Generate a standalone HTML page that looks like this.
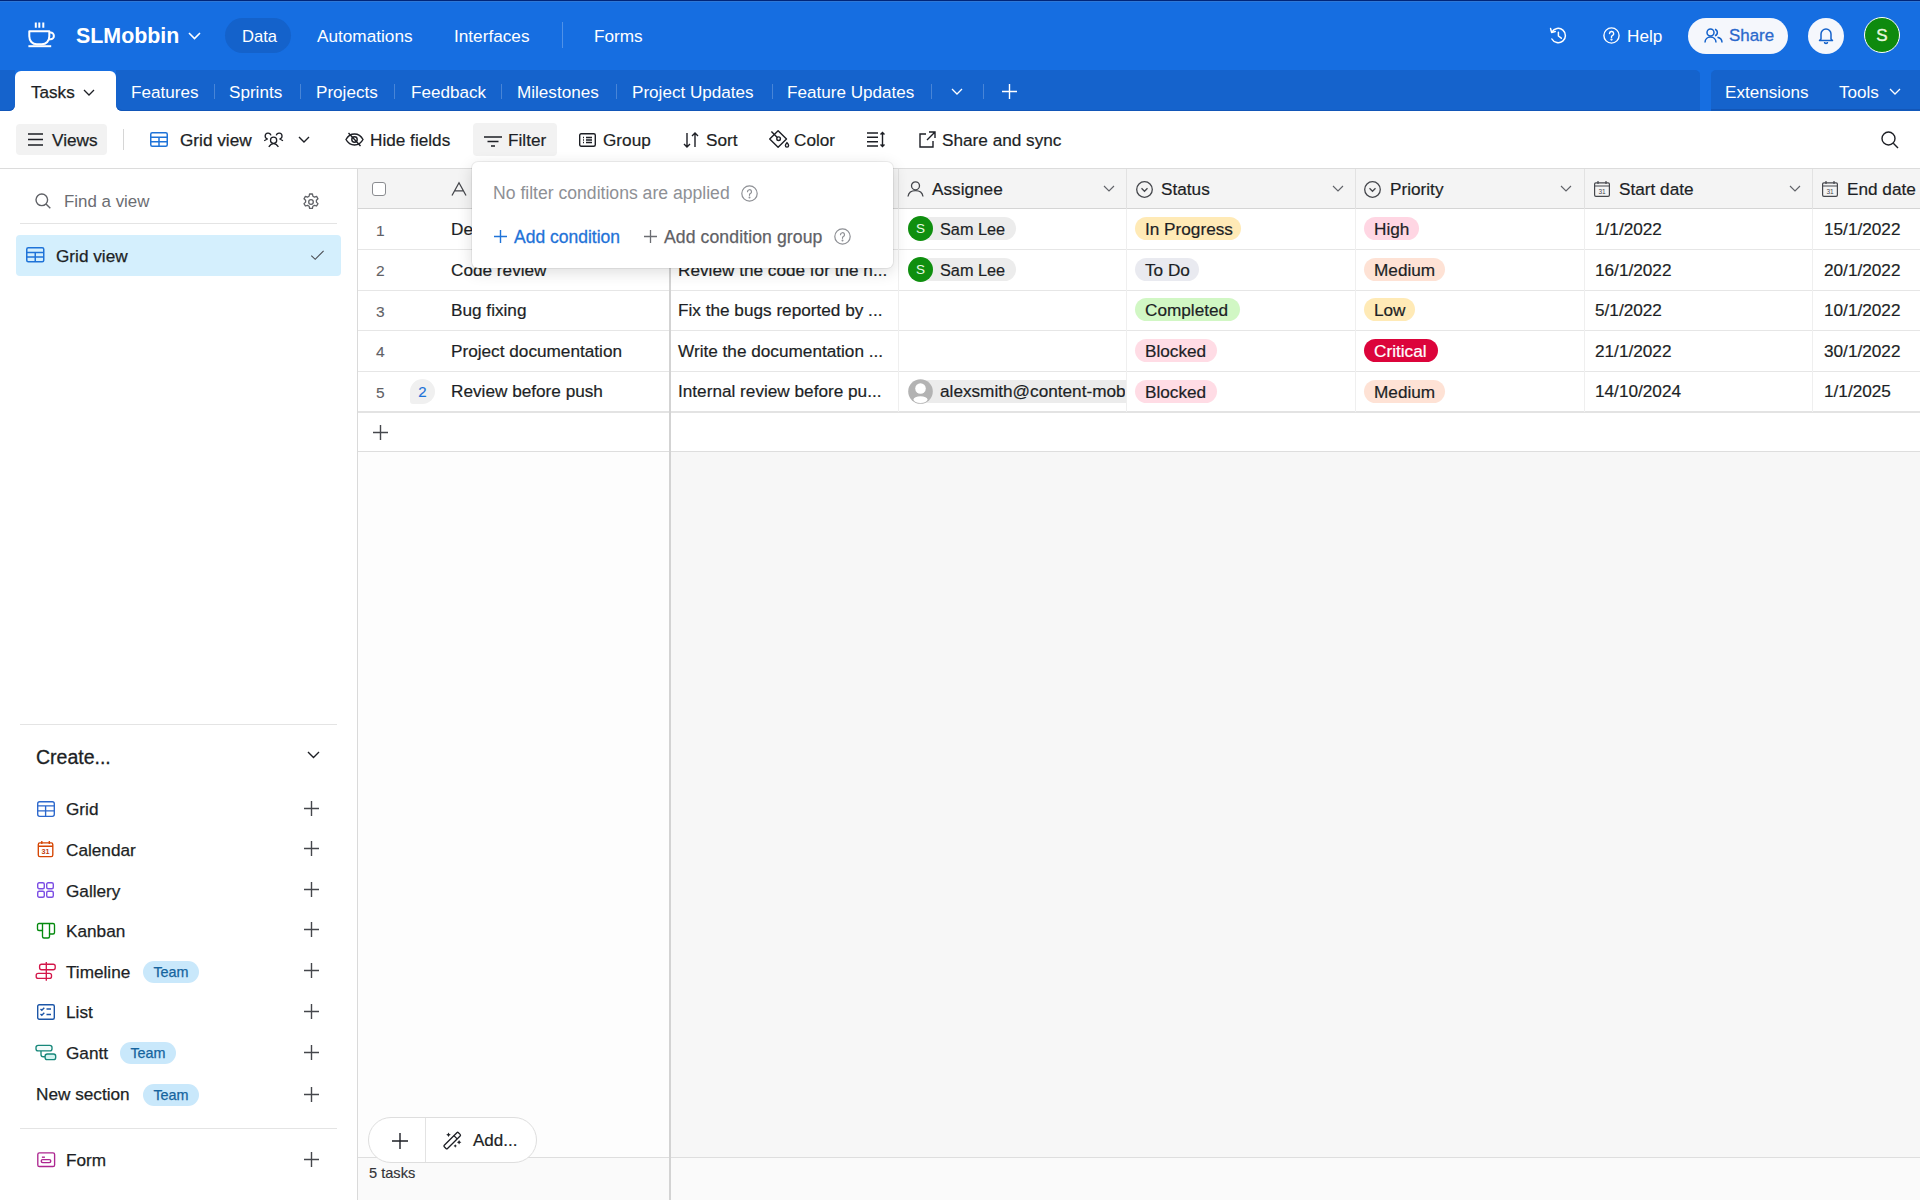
<!DOCTYPE html>
<html><head><meta charset="utf-8">
<style>
*{box-sizing:border-box;margin:0;padding:0}
html,body{width:1920px;height:1200px;overflow:hidden;background:#fff;font-family:"Liberation Sans",sans-serif;color:#1d1f25}
.a{position:absolute;white-space:nowrap}
svg{position:absolute;overflow:visible}
.topbar{position:absolute;left:0;top:0;width:1920px;height:78px;background:#166ee1}
.topline{position:absolute;left:0;top:0;width:1920px;height:1px;background:#00267a;box-shadow:0 1px 0 #2f78d6}
.wt{color:#fff;font-size:17.2px}
.tabbar{position:absolute;top:70px;height:41px;background:#1563cc;box-shadow:inset 0 -1px 0 #1256b8}
.tab{color:#fff;font-size:17.1px;top:83px}
.tsep{position:absolute;top:84px;width:1px;height:15px;background:rgba(255,255,255,.22)}
.tb{font-size:17.2px;color:#1d1f25;top:130px;-webkit-text-stroke:.2px #1d1f25}
.side{font-size:17.2px;color:#1d1f25;-webkit-text-stroke:.25px #1d1f25}
.badge{height:22px;border-radius:11px;background:#c9e8fb;color:#15649e;font-size:14.4px;text-align:center;line-height:23px;-webkit-text-stroke:.25px #15649e}
.hd{top:179px;font-size:17.2px;color:#1d1f25;-webkit-text-stroke:.2px #1d1f25}
.cell{font-size:17.2px;color:#1d1f25;-webkit-text-stroke:.2px #1d1f25}
.num{font-size:15.5px;color:#5f6166;-webkit-text-stroke:.1px #5f6166}
.pill{height:22.5px;border-radius:12px;font-size:17.2px;line-height:24px;padding-left:10px;color:#1d1f25;-webkit-text-stroke:.2px currentColor}
</style></head><body>

<!-- TOP BAR -->
<div class="topbar"></div>
<div class="topline"></div>
<!-- logo cup -->
<svg style="left:28px;top:22px" width="28" height="26" viewBox="0 0 28 26" fill="none" stroke="#fff" stroke-width="2"><path d="M7.8 .4v5.4M11.3 .4v5.4M15.3 .4v5.4"/><path d="M1.3 9.3h20v5c0 4.5-3 8-7.5 8h-5C4.3 22.3 1.3 18.8 1.3 14.3z" stroke-linejoin="round"/><path d="M21.3 10.5h1.2a3.4 3.4 0 0 1 0 6.8h-1.6"/><path d="M.4 24.2h22.8"/></svg>
<div class="a" style="left:76px;top:24px;font-size:21.4px;font-weight:bold;color:#fff">SLMobbin</div>
<svg style="left:188px;top:32px" width="13" height="8" viewBox="0 0 13 8" fill="none" stroke="#fff" stroke-width="1.6"><path d="M1 1l5.5 5.5L12 1"/></svg>
<div class="a" style="left:225px;top:18px;width:66px;height:35px;border-radius:18px;background:#1462cb"></div>
<div class="a wt" style="left:242px;top:26.5px;font-size:16.6px">Data</div>
<div class="a wt" style="left:317px;top:26px">Automations</div>
<div class="a wt" style="left:454px;top:26px">Interfaces</div>
<div class="a" style="left:562px;top:22px;width:1px;height:26px;background:rgba(255,255,255,.25)"></div>
<div class="a wt" style="left:594px;top:26px">Forms</div>

<!-- right side of top bar -->
<svg style="left:1548px;top:26px" width="20" height="20" viewBox="0 0 20 20" fill="none" stroke="#fff" stroke-width="1.5" stroke-linecap="round" stroke-linejoin="round"><path d="M4 5.9A7.2 7.2 0 1 1 3.9 13"/><path d="M2.6 2.6L3.6 6.4 7.3 5.5"/><path d="M10.4 6.2V10l2.9 2.2"/></svg>
<svg style="left:1603px;top:27px" width="18" height="18" viewBox="0 0 18 18" fill="none" stroke="#fff" stroke-width="1.4"><circle cx="8.5" cy="8.5" r="7.6"/><path d="M6.5 6.6a2.1 2.1 0 1 1 2.8 2c-.5.2-.8.6-.8 1.1v.7" stroke-linecap="round"/><circle cx="8.5" cy="12.6" r=".45" fill="#fff"/></svg>
<div class="a wt" style="left:1627px;top:26px">Help</div>
<div class="a" style="left:1688px;top:17.5px;width:100px;height:36px;border-radius:18px;background:#f5f7fc"></div>
<svg style="left:1704px;top:28px" width="19" height="15" viewBox="0 0 19 15" fill="none" stroke="#1462cb" stroke-width="1.5">
  <circle cx="6.5" cy="4.5" r="3.5"/><path d="M1 14.5c0-3.3 2.5-5.5 5.5-5.5s5.5 2.2 5.5 5.5"/><path d="M11 1.2a3.5 3.5 0 0 1 0 6.6"/><path d="M13.5 9.3c2.4.6 4.5 2.5 4.5 5.2"/>
</svg>
<div class="a" style="left:1729px;top:26px;font-size:16.9px;color:#2a68cc;-webkit-text-stroke:.3px #2a68cc">Share</div>
<div class="a" style="left:1808px;top:17.5px;width:36px;height:36px;border-radius:50%;background:#f5f7fc"></div>
<svg style="left:1818px;top:27px" width="16" height="17" viewBox="0 0 16 17" fill="none" stroke="#1462cb" stroke-width="1.5">
  <path d="M3 12V7a5 5 0 0 1 10 0v5l1.5 1.5h-13z" stroke-linejoin="round"/><path d="M6.5 15a1.5 1.5 0 0 0 3 0"/>
</svg>
<div class="a" style="left:1864px;top:17px;width:36px;height:36px;border-radius:50%;background:#0e8a0e;border:1.5px solid #fff"></div>
<div class="a" style="left:1864px;top:26px;width:36px;text-align:center;color:#e6f7df;font-size:17px;-webkit-text-stroke:.4px #e6f7df">S</div>

<!-- TAB BAR -->
<div class="tabbar" style="left:0;width:15px;border-bottom-right-radius:6px"></div>
<div class="tabbar" style="left:116px;width:1584px;border-bottom-left-radius:6px;border-top-right-radius:5px"></div>
<div class="a" style="left:1700px;top:70px;width:11px;height:41px;background:#166ee1"></div>
<div class="tabbar" style="left:1711px;width:209px;border-top-left-radius:5px;border-bottom:1px solid #1259bb"></div>
<div class="a" style="left:15px;top:71px;width:101px;height:41px;background:#fff;border-radius:6px 6px 0 0"></div>
<div class="a tab" style="left:31px;color:#1d1f25;-webkit-text-stroke:.25px #1d1f25">Tasks</div>
<svg style="left:83px;top:89px" width="12" height="7" viewBox="0 0 12 7" fill="none" stroke="#1d1f25" stroke-width="1.3"><path d="M1 1l5 5 5-5"/></svg>
<div class="a tab" style="left:131px">Features</div>
<div class="tsep" style="left:214px"></div>
<div class="a tab" style="left:229px">Sprints</div>
<div class="tsep" style="left:300px"></div>
<div class="a tab" style="left:316px">Projects</div>
<div class="tsep" style="left:394px"></div>
<div class="a tab" style="left:411px">Feedback</div>
<div class="tsep" style="left:501px"></div>
<div class="a tab" style="left:517px">Milestones</div>
<div class="tsep" style="left:616px"></div>
<div class="a tab" style="left:632px">Project Updates</div>
<div class="tsep" style="left:772px"></div>
<div class="a tab" style="left:787px">Feature Updates</div>
<div class="tsep" style="left:931px"></div>
<svg style="left:951px;top:88px" width="12" height="7" viewBox="0 0 12 7" fill="none" stroke="#fff" stroke-width="1.3"><path d="M1 1l5 5 5-5"/></svg>
<div class="tsep" style="left:983px"></div>
<svg style="left:1002px;top:84px" width="15" height="15" viewBox="0 0 15 15" fill="none" stroke="#fff" stroke-width="1.4"><path d="M7.5 0v15M0 7.5h15"/></svg>
<div class="a tab" style="left:1725px">Extensions</div>
<div class="a tab" style="left:1839px">Tools</div>
<svg style="left:1889px;top:88px" width="12" height="7" viewBox="0 0 12 7" fill="none" stroke="#fff" stroke-width="1.3"><path d="M1 1l5 5 5-5"/></svg>

<!-- TOOLBAR -->
<div class="a" style="left:0;top:168px;width:1920px;height:1px;background:#dcdcdc"></div>
<div class="a" style="left:16px;top:124px;width:91px;height:31px;border-radius:4px;background:#f2f2f2"></div>
<svg style="left:28px;top:133px" width="15" height="13" viewBox="0 0 15 13" fill="none" stroke="#1d1f25" stroke-width="1.5"><path d="M0 1h15M0 6.5h15M0 12h15"/></svg>
<div class="a tb" style="left:52px;-webkit-text-stroke:.25px #1d1f25">Views</div>
<div class="a" style="left:123px;top:129px;width:1px;height:21px;background:#d6d6d6"></div>
<svg style="left:150px;top:132px" width="18" height="15" viewBox="0 0 18 15" fill="none" stroke="#1f73d8" stroke-width="1.5"><rect x=".75" y=".75" width="16.5" height="13.5" rx="1.5"/><path d="M.75 5.2h16.5M.75 9.7h16.5M9 5.2v9"/></svg>
<div class="a tb" style="left:180px;-webkit-text-stroke:.25px #1d1f25">Grid view</div>
<svg style="left:258px;top:125px" width="30" height="25" viewBox="0 0 30 25" fill="none" stroke="#1d1f25" stroke-width="1.3"><path d="M12.9 10.4A2.9 2.9 0 1 0 9.5 13.9M6.2 15.7L9.8 13.7M18.3 10.4A2.9 2.9 0 1 1 21.7 13.9M25 15.7L21.4 13.7"/><circle cx="15.6" cy="15.3" r="3.1"/><path d="M10.8 21.8C12.5 19.3 14 18.6 15.6 18.6S18.7 19.3 20.4 21.8"/></svg>
<svg style="left:298px;top:136px" width="12" height="7" viewBox="0 0 12 7" fill="none" stroke="#1d1f25" stroke-width="1.4"><path d="M1 1l5 5 5-5"/></svg>
<svg style="left:345px;top:132px" width="19" height="15" viewBox="0 0 19 15" fill="none" stroke="#1d1f25" stroke-width="1.4"><path d="M1 7.5C3 3.8 6 2 9.5 2s6.5 1.8 8.5 5.5c-2 3.7-5 5.5-8.5 5.5S3 11.2 1 7.5z"/><circle cx="9.5" cy="7.5" r="2.7"/><path d="M3.5 1l12 13"/></svg>
<div class="a tb" style="left:370px">Hide fields</div>
<div class="a" style="left:473px;top:123px;width:84px;height:33px;border-radius:4px;background:#f2f2f2"></div>
<svg style="left:484px;top:136px" width="18" height="11" viewBox="0 0 18 11" fill="none" stroke="#1d1f25" stroke-width="1.4"><path d="M0 1h18M3.5 5.5h11M7 10h4"/></svg>
<div class="a tb" style="left:508px">Filter</div>
<svg style="left:579px;top:133px" width="17" height="14" viewBox="0 0 17 14" fill="none" stroke="#1d1f25" stroke-width="1.4"><rect x=".7" y=".7" width="15.6" height="12.6" rx="1.5"/><path d="M4 4.5h1M7 4.5h6M4 7h1M7 7h6M4 9.5h1M7 9.5h6"/></svg>
<div class="a tb" style="left:603px">Group</div>
<svg style="left:683px;top:132px" width="16" height="16" viewBox="0 0 16 16" fill="none" stroke="#1d1f25" stroke-width="1.4"><path d="M4 1v14M1 12l3 3 3-3M12 15V1M9 4l3-3 3 3"/></svg>
<div class="a tb" style="left:706px">Sort</div>
<svg style="left:764px;top:126px" width="30" height="26" viewBox="0 0 30 26" fill="none" stroke="#1d1f25" stroke-width="1.4" stroke-linejoin="round"><path d="M14.1 4.8L22.5 13.1 14.1 21.2 5.7 13.1z"/><path d="M7.4 5.4L13.3 11.4"/><circle cx="14.6" cy="12.7" r="1.8"/><path d="M23 16.6c-.9 1-1.6 2-1.6 2.9a1.6 1.6 0 0 0 3.2 0c0-.9-.7-1.9-1.6-2.9z"/></svg>
<div class="a tb" style="left:794px">Color</div>
<svg style="left:867px;top:132px" width="19" height="15" viewBox="0 0 19 15" fill="none" stroke="#1d1f25" stroke-width="1.4"><path d="M0 1h11M0 5.3h11M0 9.7h11M0 14h11M15.5 1v13M13.5 2.5l2-2 2 2M13.5 12.5l2 2 2-2"/></svg>
<svg style="left:919px;top:131px" width="17" height="17" viewBox="0 0 17 17" fill="none" stroke="#1d1f25" stroke-width="1.4"><path d="M7 3H1v13h13v-6"/><path d="M10 1h6v6M16 1L8 9"/></svg>
<div class="a tb" style="left:942px">Share and sync</div>
<svg style="left:1881px;top:131px" width="18" height="18" viewBox="0 0 18 18" fill="none" stroke="#1d1f25" stroke-width="1.4"><circle cx="7.5" cy="7.5" r="6.5"/><path d="M12.3 12.3L17 17"/></svg>


<!-- SIDEBAR -->
<div class="a" style="left:357px;top:169px;width:1px;height:1031px;background:#dadada"></div>
<svg style="left:35px;top:193px" width="16" height="16" viewBox="0 0 16 16" fill="none" stroke="#5f6166" stroke-width="1.4"><circle cx="6.8" cy="6.8" r="5.8"/><path d="M11 11l4.3 4.3"/></svg>
<div class="a" style="left:64px;top:191.5px;font-size:16.9px;color:#6b6d72">Find a view</div>
<svg style="left:302px;top:193px" width="18" height="18" viewBox="0 0 18 18" fill="none" stroke="#5f6166" stroke-width="1.3"><path d="M7.6 1h2.8l.5 2.2 1.6.9 2.1-.7 1.4 2.4-1.6 1.5v1.8l1.6 1.5-1.4 2.4-2.1-.7-1.6.9-.5 2.2H7.6l-.5-2.2-1.6-.9-2.1.7-1.4-2.4 1.6-1.5V7.3L2 5.8l1.4-2.4 2.1.7 1.6-.9z" stroke-linejoin="round"/><circle cx="9" cy="9" r="2.3"/></svg>
<div class="a" style="left:20px;top:223px;width:317px;height:1px;background:#e4e4e4"></div>
<div class="a" style="left:16px;top:235px;width:325px;height:41px;border-radius:4px;background:#d4effd"></div>
<svg style="left:26px;top:247px" width="19" height="16" viewBox="0 0 19 16" fill="none" stroke="#1f73d8" stroke-width="1.5"><rect x=".75" y=".75" width="17" height="14" rx="1.5"/><path d="M.75 5.4h17M.75 10.1h17M9.25 5.4v9.6"/></svg>
<div class="a" style="left:56px;top:246px;font-size:17.2px;color:#1d1f25;-webkit-text-stroke:.25px #1d1f25">Grid view</div>
<svg style="left:310px;top:250px" width="15" height="12" viewBox="0 0 15 12" fill="none" stroke="#4a4c51" stroke-width="1.1"><path d="M1.3 5.6l3.9 3.7L13.6 .8"/></svg>

<div class="a" style="left:20px;top:724px;width:317px;height:1px;background:#e4e4e4"></div>
<div class="a" style="left:36px;top:746px;font-size:19.5px;color:#1d1f25;-webkit-text-stroke:.3px #1d1f25">Create...</div>
<svg style="left:307px;top:751px" width="13" height="8" viewBox="0 0 13 8" fill="none" stroke="#1d1f25" stroke-width="1.4"><path d="M1 1l5.5 5.5L12 1"/></svg>

<svg style="left:37px;top:801px" width="18" height="16" viewBox="0 0 18 16" fill="none" stroke="#2b67cc" stroke-width="1.35"><rect x=".7" y=".7" width="16.6" height="14.6" rx="2"/><path d="M.7 4.8h16.6M.7 9.8h16.6M8.6 4.8v10.5"/></svg>
<div class="a side" style="left:66px;top:799px">Grid</div>
<svg style="left:36px;top:840px" width="20" height="19" viewBox="0 0 20 19" fill="none" stroke="#d54401" stroke-width="1.35"><rect x="2.3" y="2.8" width="14.5" height="13.8" rx="1.6"/><path d="M2.3 6.2h14.5M5.8 1v3M13.3 1v3"/><text x="9.6" y="14.4" font-size="7.2" font-family="Liberation Sans" font-weight="bold" text-anchor="middle" fill="#c2410c" stroke="none">31</text></svg>
<div class="a side" style="left:66px;top:840px">Calendar</div>
<svg style="left:37px;top:882px" width="17" height="16" viewBox="0 0 17 16" fill="none" stroke="#7c4ee4" stroke-width="1.4"><rect x=".7" y=".7" width="6.6" height="6" rx="1.5"/><rect x="9.7" y=".7" width="6.6" height="6" rx="1.5"/><rect x=".7" y="9.3" width="6.6" height="6" rx="1.5"/><rect x="9.7" y="9.3" width="6.6" height="6" rx="1.5"/></svg>
<div class="a side" style="left:66px;top:881px">Gallery</div>
<svg style="left:36px;top:922px" width="20" height="18" viewBox="0 0 20 18" fill="none" stroke="#048a0e" stroke-width="1.35" stroke-linejoin="round"><path d="M3 1.5H17a1.5 1.5 0 0 1 1.5 1.5V10.5a1.5 1.5 0 0 1-1.5 1.5H13.5V14.5a1.5 1.5 0 0 1-1.5 1.5H8a1.5 1.5 0 0 1-1.5-1.5V8.5H3a1.5 1.5 0 0 1-1.5-1.5V3A1.5 1.5 0 0 1 3 1.5z"/><path d="M6.5 1.5V8.5M13.5 1.5V12"/></svg>
<div class="a side" style="left:66px;top:921px">Kanban</div>
<svg style="left:34px;top:960px" width="24" height="22" viewBox="0 0 24 22" fill="none" stroke="#d3174a" stroke-width="1.35"><path d="M12.3 1.9V20.7"/><rect x="5.6" y="4.2" width="15.6" height="5.5" rx="2"/><rect x="2.2" y="13.3" width="15.3" height="5.1" rx="2"/></svg>
<div class="a side" style="left:66px;top:962px">Timeline</div>
<div class="a badge" style="left:143px;top:961px;width:56px">Team</div>
<svg style="left:37px;top:1004px" width="18" height="16" viewBox="0 0 18 16" fill="none" stroke="#1c56a8" stroke-width="1.4"><rect x=".7" y=".7" width="16.6" height="14.6" rx="1.5"/><path d="M3.5 5l1.3 1.3L7.3 3.8M3.5 10l1.3 1.3 2.5-2.5M9.5 5h4.5M9.5 10.5h4.5"/></svg>
<div class="a side" style="left:66px;top:1002px">List</div>
<svg style="left:34px;top:1043px" width="24" height="19" viewBox="0 0 24 19" fill="none" stroke="#17877a" stroke-width="1.35"><rect x="2" y="2.4" width="16" height="5.5" rx="2.2" fill="#f2fbfa"/><rect x="11.1" y="11" width="10.6" height="5.6" rx="2.2" fill="#d3f3f0"/><path d="M7 7.9v3.6a2.2 2.2 0 0 0 2.2 2.2h1.9"/></svg>
<div class="a side" style="left:66px;top:1043px">Gantt</div>
<div class="a badge" style="left:120px;top:1042px;width:56px">Team</div>
<div class="a side" style="left:36px;top:1084px">New section</div>
<div class="a badge" style="left:143px;top:1084px;width:56px">Team</div>
<div class="a" style="left:20px;top:1128px;width:317px;height:1px;background:#e4e4e4"></div>
<svg style="left:36px;top:1150px" width="20" height="18" viewBox="0 0 20 18" fill="none" stroke="#ad2690" stroke-width="1.35"><rect x="1.8" y="2.8" width="16.8" height="13.7" rx="1.6"/><path d="M5.9 7.2h3"/><rect x="5.2" y="9.6" width="9.6" height="3" rx="1.5"/></svg>
<div class="a side" style="left:66px;top:1150px">Form</div>
<svg style="left:304px;top:801px" width="15" height="15" viewBox="0 0 15 15" fill="none" stroke="#45474c" stroke-width="1.4"><path d="M7.5 0v15M0 7.5h15"/></svg>
<svg style="left:304px;top:841px" width="15" height="15" viewBox="0 0 15 15" fill="none" stroke="#45474c" stroke-width="1.4"><path d="M7.5 0v15M0 7.5h15"/></svg>
<svg style="left:304px;top:882px" width="15" height="15" viewBox="0 0 15 15" fill="none" stroke="#45474c" stroke-width="1.4"><path d="M7.5 0v15M0 7.5h15"/></svg>
<svg style="left:304px;top:922px" width="15" height="15" viewBox="0 0 15 15" fill="none" stroke="#45474c" stroke-width="1.4"><path d="M7.5 0v15M0 7.5h15"/></svg>
<svg style="left:304px;top:963px" width="15" height="15" viewBox="0 0 15 15" fill="none" stroke="#45474c" stroke-width="1.4"><path d="M7.5 0v15M0 7.5h15"/></svg>
<svg style="left:304px;top:1004px" width="15" height="15" viewBox="0 0 15 15" fill="none" stroke="#45474c" stroke-width="1.4"><path d="M7.5 0v15M0 7.5h15"/></svg>
<svg style="left:304px;top:1045px" width="15" height="15" viewBox="0 0 15 15" fill="none" stroke="#45474c" stroke-width="1.4"><path d="M7.5 0v15M0 7.5h15"/></svg>
<svg style="left:304px;top:1087px" width="15" height="15" viewBox="0 0 15 15" fill="none" stroke="#45474c" stroke-width="1.4"><path d="M7.5 0v15M0 7.5h15"/></svg>
<svg style="left:304px;top:1152px" width="15" height="15" viewBox="0 0 15 15" fill="none" stroke="#45474c" stroke-width="1.4"><path d="M7.5 0v15M0 7.5h15"/></svg>


<!-- GRID -->
<!--GRID_START-->
<div class="a" style="left:358px;top:452px;width:312px;height:748px;background:#fdfdfd"></div>
<div class="a" style="left:670px;top:452px;width:1250px;height:748px;background:#f7f7f7"></div>
<div class="a" style="left:358px;top:1158px;width:1562px;height:42px;background:#fafafa"></div>
<div class="a" style="left:358px;top:169px;width:1562px;height:40px;background:#f4f4f4"></div>
<div class="a" style="left:358px;top:208px;width:1562px;height:1px;background:#d5d5d5"></div>
<div class="a" style="left:358px;top:249px;width:1562px;height:1px;background:#e6e6e6"></div>
<div class="a" style="left:358px;top:290px;width:1562px;height:1px;background:#e6e6e6"></div>
<div class="a" style="left:358px;top:330px;width:1562px;height:1px;background:#e6e6e6"></div>
<div class="a" style="left:358px;top:371px;width:1562px;height:1px;background:#e6e6e6"></div>
<div class="a" style="left:358px;top:411px;width:1562px;height:2px;background:#e3e3e3"></div>
<div class="a" style="left:358px;top:451px;width:1562px;height:1px;background:#dedede"></div>
<div class="a" style="left:358px;top:1157px;width:1562px;height:1px;background:#dedede"></div>
<div class="a" style="left:898px;top:169px;width:1px;height:40px;background:#e2e2e2"></div>
<div class="a" style="left:898px;top:209px;width:1px;height:203px;background:#efefef"></div>
<div class="a" style="left:1126px;top:169px;width:1px;height:40px;background:#e2e2e2"></div>
<div class="a" style="left:1126px;top:209px;width:1px;height:203px;background:#efefef"></div>
<div class="a" style="left:1355px;top:169px;width:1px;height:40px;background:#e2e2e2"></div>
<div class="a" style="left:1355px;top:209px;width:1px;height:203px;background:#efefef"></div>
<div class="a" style="left:1584px;top:169px;width:1px;height:40px;background:#e2e2e2"></div>
<div class="a" style="left:1584px;top:209px;width:1px;height:203px;background:#efefef"></div>
<div class="a" style="left:1812px;top:169px;width:1px;height:40px;background:#e2e2e2"></div>
<div class="a" style="left:1812px;top:209px;width:1px;height:203px;background:#efefef"></div>
<div class="a" style="left:669px;top:169px;width:2px;height:1031px;background:#d3d3d3"></div>
<div class="a" style="left:372px;top:182px;width:14px;height:14px;border:1.3px solid #8a8c90;border-radius:3px;background:#fff"></div>
<svg style="left:451px;top:182px" width="16" height="14" viewBox="0 0 16 14" fill="none" stroke="#45474c" stroke-width="1.3"><path d="M1 13.5L8 .8l7 12.7M3.8 8.8h8.4"/></svg>
<svg style="left:907px;top:181px" width="17" height="16" viewBox="0 0 17 16" fill="none" stroke="#45474c" stroke-width="1.3"><circle cx="8.5" cy="4.8" r="4"/><path d="M1 15.5c.6-3.6 3.6-5.8 7.5-5.8s6.9 2.2 7.5 5.8"/></svg><div class="a hd" style="left:932px">Assignee</div><svg style="left:1103px;top:185px" width="12" height="7" viewBox="0 0 12 7" fill="none" stroke="#616369" stroke-width="1.15"><path d="M1 1l5 5 5-5"/></svg>
<svg style="left:1136px;top:181px" width="17" height="17" viewBox="0 0 17 17" fill="none" stroke="#45474c" stroke-width="1.3"><circle cx="8.5" cy="8.5" r="7.8"/><path d="M5.5 7.3l3 3 3-3"/></svg><div class="a hd" style="left:1161px">Status</div><svg style="left:1332px;top:185px" width="12" height="7" viewBox="0 0 12 7" fill="none" stroke="#616369" stroke-width="1.15"><path d="M1 1l5 5 5-5"/></svg>
<svg style="left:1364px;top:181px" width="17" height="17" viewBox="0 0 17 17" fill="none" stroke="#45474c" stroke-width="1.3"><circle cx="8.5" cy="8.5" r="7.8"/><path d="M5.5 7.3l3 3 3-3"/></svg><div class="a hd" style="left:1390px">Priority</div><svg style="left:1560px;top:185px" width="12" height="7" viewBox="0 0 12 7" fill="none" stroke="#616369" stroke-width="1.15"><path d="M1 1l5 5 5-5"/></svg>
<svg style="left:1594px;top:181px" width="16" height="16" viewBox="0 0 16 16" fill="none" stroke="#45474c" stroke-width="1.2"><rect x=".6" y="1.8" width="14.8" height="13.6" rx="1.3"/><path d="M.6 5h14.8M4 0v3M12 0v3"/><text x="8" y="12.8" font-size="6.5" font-family="Liberation Sans" text-anchor="middle" fill="#45474c" stroke="none">31</text></svg><div class="a hd" style="left:1619px">Start date</div><svg style="left:1789px;top:185px" width="12" height="7" viewBox="0 0 12 7" fill="none" stroke="#616369" stroke-width="1.15"><path d="M1 1l5 5 5-5"/></svg>
<svg style="left:1822px;top:181px" width="16" height="16" viewBox="0 0 16 16" fill="none" stroke="#45474c" stroke-width="1.2"><rect x=".6" y="1.8" width="14.8" height="13.6" rx="1.3"/><path d="M.6 5h14.8M4 0v3M12 0v3"/><text x="8" y="12.8" font-size="6.5" font-family="Liberation Sans" text-anchor="middle" fill="#45474c" stroke="none">31</text></svg><div class="a hd" style="left:1847px">End date</div>
<div class="a num" style="left:376px;top:221.5px">1</div>
<div class="a cell" style="left:451px;top:219px">Design</div>
<div class="a pill" style="left:1135px;top:217px;width:106px;background:#ffeab6">In Progress</div>
<div class="a pill" style="left:1364px;top:217px;width:55px;background:#ffd6e3;color:#1d1f25">High</div>
<div class="a cell" style="left:1595px;top:219px">1/1/2022</div>
<div class="a cell" style="left:1824px;top:219px">15/1/2022</div>
<div class="a num" style="left:376px;top:261.5px">2</div>
<div class="a cell" style="left:451px;top:260px">Code review</div>
<div class="a cell" style="left:678px;top:260px">Review the code for the n...</div>
<div class="a pill" style="left:1135px;top:258px;width:64px;background:#e9eaf0">To Do</div>
<div class="a pill" style="left:1364px;top:258px;width:81px;background:#fee2d5;color:#1d1f25">Medium</div>
<div class="a cell" style="left:1595px;top:260px">16/1/2022</div>
<div class="a cell" style="left:1824px;top:260px">20/1/2022</div>
<div class="a num" style="left:376px;top:302.5px">3</div>
<div class="a cell" style="left:451px;top:300px">Bug fixing</div>
<div class="a cell" style="left:678px;top:300px">Fix the bugs reported by ...</div>
<div class="a pill" style="left:1135px;top:298px;width:105px;background:#d1f7c4">Completed</div>
<div class="a pill" style="left:1364px;top:298px;width:51px;background:#ffeab6;color:#1d1f25">Low</div>
<div class="a cell" style="left:1595px;top:300px">5/1/2022</div>
<div class="a cell" style="left:1824px;top:300px">10/1/2022</div>
<div class="a num" style="left:376px;top:342.5px">4</div>
<div class="a cell" style="left:451px;top:341px">Project documentation</div>
<div class="a cell" style="left:678px;top:341px">Write the documentation ...</div>
<div class="a pill" style="left:1135px;top:339px;width:82px;background:#ffdce5">Blocked</div>
<div class="a pill" style="left:1364px;top:339px;width:74px;background:#dc043b;color:#fff">Critical</div>
<div class="a cell" style="left:1595px;top:341px">21/1/2022</div>
<div class="a cell" style="left:1824px;top:341px">30/1/2022</div>
<div class="a num" style="left:376px;top:383.5px">5</div>
<div class="a cell" style="left:451px;top:381px">Review before push</div>
<div class="a cell" style="left:678px;top:381px">Internal review before pu...</div>
<div class="a pill" style="left:1135px;top:380px;width:82px;background:#ffdce5">Blocked</div>
<div class="a pill" style="left:1364px;top:380px;width:81px;background:#fee2d5;color:#1d1f25">Medium</div>
<div class="a cell" style="left:1595px;top:381px">14/10/2024</div>
<div class="a cell" style="left:1824px;top:381px">1/1/2025</div>
<div class="a" style="left:912px;top:217px;width:104px;height:22.5px;border-radius:12px;background:#ececec"></div>
<div class="a" style="left:908px;top:216px;width:25px;height:25px;border-radius:50%;background:#0f8f0f;color:#e8fbe4;font-size:13.5px;text-align:center;line-height:25px">S</div>
<div class="a cell" style="left:940px;top:219.5px;font-size:16.3px">Sam Lee</div>
<div class="a" style="left:912px;top:258px;width:104px;height:22.5px;border-radius:12px;background:#ececec"></div>
<div class="a" style="left:908px;top:257px;width:25px;height:25px;border-radius:50%;background:#0f8f0f;color:#e8fbe4;font-size:13.5px;text-align:center;line-height:25px">S</div>
<div class="a cell" style="left:940px;top:260.5px;font-size:16.3px">Sam Lee</div>
<div class="a" style="left:912px;top:380px;width:214px;height:22.5px;border-radius:12px 0 0 12px;background:#ececec"></div>
<svg style="left:908px;top:378.5px" width="25" height="25" viewBox="0 0 25 25"><defs><clipPath id="av"><circle cx="12.5" cy="12.5" r="12.3"/></clipPath></defs><circle cx="12.5" cy="12.5" r="12.3" fill="#b3b3b3"/><g clip-path="url(#av)" fill="#fff"><circle cx="12.5" cy="9.5" r="5.3"/><ellipse cx="12.5" cy="20.6" rx="7" ry="3.3"/></g></svg>
<div class="a" style="left:940px;top:381px;width:185px;overflow:hidden"><span class="cell" style="position:static">alexsmith@content-mobbin.com</span></div>
<div class="a" style="left:410px;top:379px;width:25px;height:25px;border-radius:50% 50% 50% 3px;background:#f0f0f0;color:#1f73d8;font-size:15px;text-align:center;line-height:25px;-webkit-text-stroke:.2px #1f73d8">2</div>
<svg style="left:373px;top:425px" width="15" height="15" viewBox="0 0 15 15" fill="none" stroke="#45474c" stroke-width="1.4"><path d="M7.5 0v15M0 7.5h15"/></svg>
<div class="a" style="left:369px;top:1165px;font-size:14.6px;color:#333438;-webkit-text-stroke:.15px #333438">5 tasks</div>
<div class="a" style="left:368px;top:1117px;width:169px;height:46px;border-radius:23px;background:#fff;border:1px solid #dedede"></div>
<div class="a" style="left:425px;top:1118px;width:1px;height:44px;background:#e3e3e3"></div>
<svg style="left:392px;top:1133px" width="16" height="16" viewBox="0 0 16 16" fill="none" stroke="#1d1f25" stroke-width="1.4"><path d="M8 0v16M0 8h16"/></svg>
<svg style="left:438px;top:1126px" width="30" height="30" viewBox="0 0 30 30" fill="none" stroke="#1d1f25" stroke-width="1.3"><g transform="rotate(-45 14.2 14.6)"><rect x="4.2" y="12.3" width="20" height="4.6" rx="1.1"/><path d="M18.9 12.3v4.6"/></g><path fill="#1d1f25" stroke="none" d="M10.50 6.45Q10.96 8.29 12.80 8.75Q10.96 9.21 10.50 11.05Q10.04 9.21 8.20 8.75Q10.04 8.29 10.50 6.45zM21.10 13.95Q21.56 15.79 23.40 16.25Q21.56 16.71 21.10 18.55Q20.64 16.71 18.80 16.25Q20.64 15.79 21.10 13.95zM17.25 18.30Q17.59 19.66 18.95 20.00Q17.59 20.34 17.25 21.70Q16.91 20.34 15.55 20.00Q16.91 19.66 17.25 18.30z"/></svg>
<div class="a" style="left:473px;top:1130.5px;font-size:17px;color:#1d1f25;-webkit-text-stroke:.2px #1d1f25">Add...</div>
<div class="a" style="left:472px;top:162px;width:421px;height:106px;border-radius:6px;background:#fff;box-shadow:0 0 0 1px rgba(0,0,0,.06),0 4px 16px rgba(0,0,0,.14)"></div>
<div class="a" style="left:493px;top:182.5px;font-size:17.6px;color:#8e9095">No filter conditions are applied</div>
<svg style="left:741px;top:185px" width="17" height="17" viewBox="0 0 17 17" fill="none" stroke="#8e9095" stroke-width="1.2"><circle cx="8.5" cy="8.5" r="7.7"/><path d="M6.5 6.7a2 2 0 1 1 2.7 1.9c-.5.2-.7.6-.7 1.1v.6" stroke-linecap="round"/><circle cx="8.5" cy="12.4" r=".4" fill="#8e9095"/></svg>
<svg style="left:494px;top:230px" width="13" height="13" viewBox="0 0 13 13" fill="none" stroke="#1f73d8" stroke-width="1.4"><path d="M6.5 0v13M0 6.5h13"/></svg>
<div class="a" style="left:514px;top:226.5px;font-size:17.5px;color:#1f73d8;-webkit-text-stroke:.3px #1f73d8">Add condition</div>
<svg style="left:644px;top:230px" width="13" height="13" viewBox="0 0 13 13" fill="none" stroke="#6b6d72" stroke-width="1.3"><path d="M6.5 0v13M0 6.5h13"/></svg>
<div class="a" style="left:664px;top:226.5px;font-size:17.6px;letter-spacing:.1px;color:#5f6166;-webkit-text-stroke:.25px #5f6166">Add condition group</div>
<svg style="left:834px;top:228px" width="17" height="17" viewBox="0 0 17 17" fill="none" stroke="#8e9095" stroke-width="1.2"><circle cx="8.5" cy="8.5" r="7.7"/><path d="M6.5 6.7a2 2 0 1 1 2.7 1.9c-.5.2-.7.6-.7 1.1v.6" stroke-linecap="round"/><circle cx="8.5" cy="12.4" r=".4" fill="#8e9095"/></svg>
<!--GRID_END-->
</body></html>
